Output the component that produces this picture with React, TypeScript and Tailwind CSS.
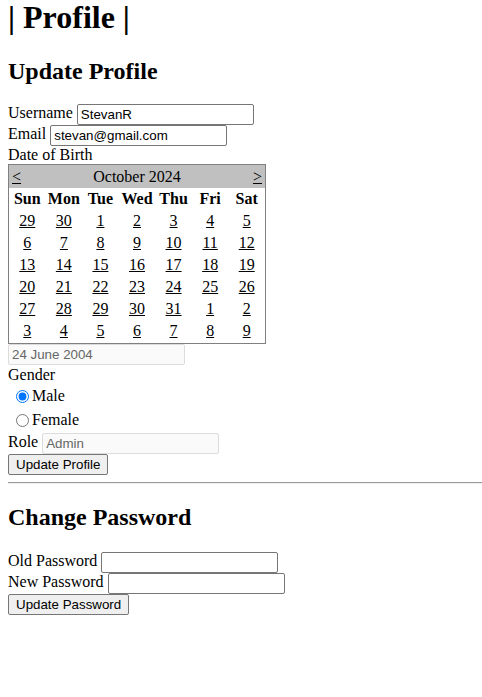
import { useState } from 'react';

const weeks = [
  [29, 30, 1, 2, 3, 4, 5],
  [6, 7, 8, 9, 10, 11, 12],
  [13, 14, 15, 16, 17, 18, 19],
  [20, 21, 22, 23, 24, 25, 26],
  [27, 28, 29, 30, 31, 1, 2],
  [3, 4, 5, 6, 7, 8, 9],
];
const dayNames = ['Sun', 'Mon', 'Tue', 'Wed', 'Thu', 'Fri', 'Sat'];

const inputCls =
  "h-[21px] w-[177px] border border-[#767676] rounded-[2px] px-[3px] align-middle text-[13.33px] font-['Liberation_Sans',Arial,sans-serif] text-black";
const disabledCls =
  "h-[21px] w-[177px] border border-[#dcdcdc] rounded-[2px] bg-[#fafafa] px-[3px] align-middle text-[13.33px] font-['Liberation_Sans',Arial,sans-serif] text-[#666666]";
const buttonCls =
  "h-[21px] border border-[#767676] rounded-[2px] bg-[#efefef] px-[7px] text-[13.33px] leading-[15px] font-['Liberation_Sans',Arial,sans-serif] text-black";

function Calendar() {
  return (
    <div className="w-[258px] border border-[#808080] pb-[1px]">
      <div className="flex h-[23px] items-center justify-between bg-[#c0c0c0] px-[3px]">
        <a className="underline">&lt;</a>
        <span>October 2024</span>
        <a className="underline">&gt;</a>
      </div>
      <div className="grid grid-cols-7">
        {dayNames.map((d) => (
          <div key={d} className="flex h-[22px] items-center justify-center font-bold">
            {d}
          </div>
        ))}
        {weeks.flat().map((n, i) => (
          <div key={i} className="flex h-[22px] items-center justify-center">
            <a className="underline">{n}</a>
          </div>
        ))}
      </div>
    </div>
  );
}

export default function App() {
  const [gender, setGender] = useState('male');

  return (
    <div className="min-h-[697px] bg-white px-2 font-['Liberation_Serif','Times_New_Roman',serif] text-[16px] leading-[18px] text-black">
      <h1 className="-mt-[1px] text-[32px] font-bold leading-[37px]">| Profile |</h1>

      <h2 className="mt-[21px] text-[24px] font-bold leading-[28px]">Update Profile</h2>

      <div className="mt-[19px]">
        <div className="h-[21px]">
          Username <input className={inputCls} defaultValue="StevanR" />
        </div>
        <div className="h-[21px]">
          Email <input className={inputCls} defaultValue="stevan@gmail.com" />
        </div>
        <div className="h-[18px]">Date of Birth</div>
        <Calendar />
        <div className="h-[21px]">
          <input className={`${disabledCls} h-[20px]`} value="24 June 2004" readOnly />
        </div>
        <div className="h-[19px] leading-[19px]">Gender</div>
        <label className="flex h-[24px] items-center">
          <input
            type="radio"
            name="gender"
            checked={gender === 'male'}
            onChange={() => setGender('male')}
            className="ml-[8px] mr-[3px] h-[13px] w-[13px] accent-[#0075ff]"
          />
          Male
        </label>
        <label className="flex h-[24px] items-center">
          <input
            type="radio"
            name="gender"
            checked={gender === 'female'}
            onChange={() => setGender('female')}
            className="ml-[8px] mr-[3px] h-[13px] w-[13px] accent-[#0075ff]"
          />
          Female
        </label>
        <div className="h-[22px] pt-[1px]">
          Role <input className={disabledCls} value="Admin" readOnly />
        </div>
        <button className={buttonCls}>Update Profile</button>
      </div>

      <hr className="-mr-2 mt-[7px] border-t border-b border-t-[#9a9a9a] border-b-[#eeeeee]" />

      <h2 className="mt-[19px] text-[24px] font-bold leading-[28px]">Change Password</h2>

      <div className="mt-[21px]">
        <div className="h-[21px]">
          Old Password <input type="password" className={inputCls} />
        </div>
        <div className="h-[21px]">
          New Password <input type="password" className={inputCls} />
        </div>
        <button className={buttonCls}>Update Password</button>
      </div>
    </div>
  );
}
